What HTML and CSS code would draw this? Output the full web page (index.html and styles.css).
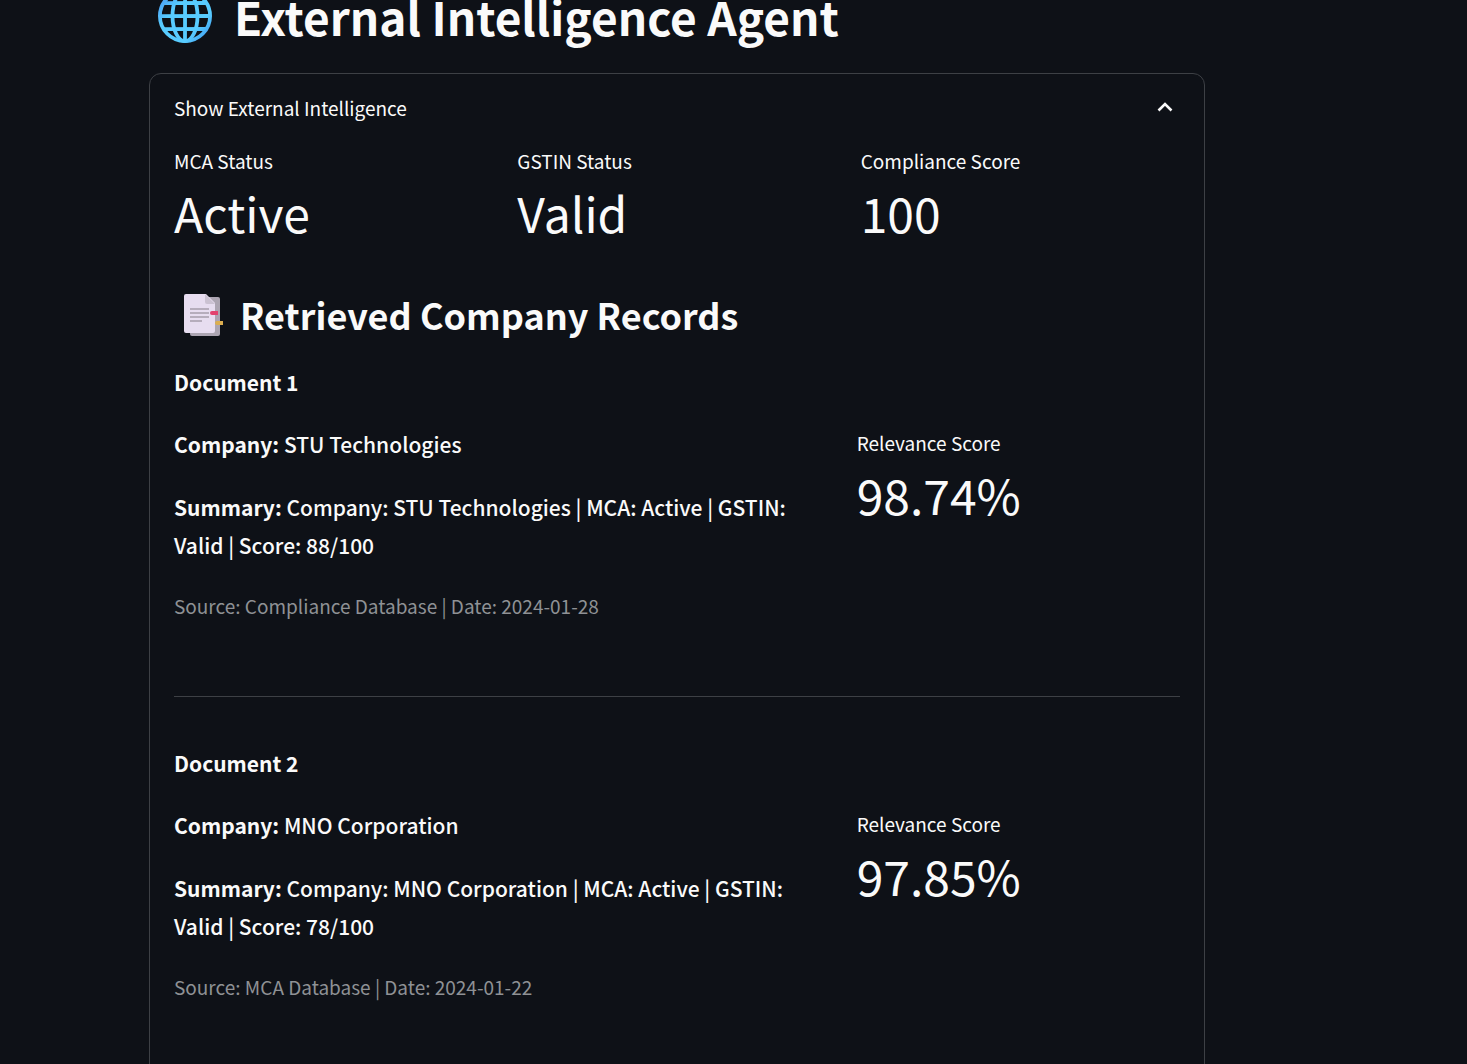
FILE: index.html
```html
<!DOCTYPE html>
<html lang="en">
<head>
<meta charset="utf-8">
<meta name="viewport" content="width=device-width, initial-scale=1">
<title>External Intelligence Agent</title>
<link rel="stylesheet" href="styles.css">
</head>
<body>
<main class="page">
  <h1 class="title">
    <svg class="title-icon" viewBox="0 0 56 56" aria-hidden="true">
      <defs>
        <linearGradient id="globe" gradientUnits="userSpaceOnUse" x1="4" y1="8" x2="52" y2="50">
          <stop offset="0" stop-color="#4a9cf5"/>
          <stop offset="0.3" stop-color="#58ccff"/>
          <stop offset="0.75" stop-color="#58ccff"/>
          <stop offset="1" stop-color="#3f9cf2"/>
        </linearGradient>
      </defs>
      <g fill="none" stroke="url(#globe)" stroke-width="3.800">
        <circle cx="28" cy="28" r="25.100"/>
        <ellipse cx="28" cy="28" rx="12.500" ry="25.100"/>
        <path d="M28.1 2.5 28 53.5M2.5 28.1 53.5 28M7 15.1 49 15M7 41.1 49 41"/>
      </g>
    </svg>
    External Intelligence Agent
  </h1>

  <details class="expander" open>
    <summary class="expander-header">
      Show External Intelligence
      <svg class="chevron" viewBox="0 0 24 24" aria-hidden="true">
        <path d="M5.500 14.500 12 8l6.500 6.500" fill="none" stroke="#fafafa" stroke-width="2.600"/>
      </svg>
    </summary>
    <div class="expander-body">
      <section class="metrics">
        <div class="metric"><div class="metric-label">MCA Status</div><div class="metric-value">Active</div></div>
        <div class="metric"><div class="metric-label">GSTIN Status</div><div class="metric-value">Valid</div></div>
        <div class="metric"><div class="metric-label">Compliance Score</div><div class="metric-value">100</div></div>
      </section>

      <h2 class="subtitle">
        <svg class="subtitle-icon" viewBox="-2 -3 56 56" aria-hidden="true">
          <path d="M16 8h26a2 2 0 0 1 2 2v35a2 2 0 0 1-2 2H16a2 2 0 0 1-2-2z" fill="#aca5b2"/>
          <path d="M10 5h20l9 9v28a2 2 0 0 1-2 2H10a2 2 0 0 1-2-2V7a2 2 0 0 1 2-2z" fill="#e7ddf0"/>
          <path d="M29 5v8a2 2 0 0 0 2 2h8z" fill="#cbc2d2"/>
          <path d="M14 20h19M14 24h19M14 28h19M14 32h12" stroke="#a69dab" stroke-width="1.500"/>
          <path d="M36 22h6v4h-6a2 2 0 0 1 0-4z" fill="#e2436f"/>
          <path d="M41 32h6v4h-6a2 2 0 0 1 0-4z" fill="#dcae50"/>
        </svg>
        Retrieved Company Records
      </h2>

      <article class="record">
        <h3 class="record-title">Document 1</h3>
        <div class="record-columns">
          <div class="record-details">
            <p><strong>Company:</strong> STU Technologies</p>
            <p><strong>Summary:</strong> Company: STU Technologies | MCA: Active | GSTIN: Valid | Score: 88/100</p>
            <p class="caption">Source: Compliance Database | Date: 2024-01-28</p>
          </div>
          <div class="record-score"><div class="metric-label">Relevance Score</div><div class="metric-value">98.74%</div></div>
        </div>
      </article>
      <hr class="divider">
      <article class="record">
        <h3 class="record-title">Document 2</h3>
        <div class="record-columns">
          <div class="record-details">
            <p><strong>Company:</strong> MNO Corporation</p>
            <p><strong>Summary:</strong> Company: MNO Corporation | MCA: Active | GSTIN: Valid | Score: 78/100</p>
            <p class="caption">Source: MCA Database | Date: 2024-01-22</p>
          </div>
          <div class="record-score"><div class="metric-label">Relevance Score</div><div class="metric-value">97.85%</div></div>
        </div>
      </article>
    </div>
  </details>
</main>
</body>
</html>
```
FILE: styles.css
```css
* {
  box-sizing: border-box;
}

body {
  margin: 0;
  background: #0e1117;
  color: #fafafa;
  font-family: "Source Sans Pro", "Noto Sans CJK SC", sans-serif;
  font-size: 21px;
  font-weight: 500;
  line-height: 38px;
}

h1, h2, h3, p {
  margin: 0;
}

.page {
  max-width: 1205px;
  height: 100vh;
  padding-left: 149px;
  overflow: hidden;
}

.title {
  display: flex;
  align-items: center;
  gap: 21px;
  margin-top: -14px;
  padding-left: 8px;
  font-size: 46px;
  font-weight: 600;
  line-height: 60px;
}

.title-icon {
  width: 56px;
  height: 56px;
}

.expander {
  margin-top: 27px;
  padding: 0 24px 80px;
  border: 1px solid #3d4045;
  border-radius: 12px;
}

.expander-header {
  display: flex;
  align-items: center;
  justify-content: space-between;
  padding: 17px 3px 18px 0;
  font-size: 19px;
  font-weight: 400;
  line-height: 34px;
  list-style: none;
  cursor: pointer;
}

.chevron {
  width: 24px;
  height: 24px;
}

.metrics {
  display: grid;
  grid-template-columns: repeat(3, 1fr);
  gap: 24px;
}

.metric-label {
  font-size: 19px;
  font-weight: 400;
  line-height: 36px;
}

.metric-value {
  font-size: 48px;
  font-weight: 400;
  line-height: 66px;
}

.subtitle {
  display: flex;
  align-items: center;
  gap: 10px;
  margin: 41px 0 21px;
  font-size: 36px;
  font-weight: 600;
  line-height: 50px;
}

.subtitle-icon {
  width: 56px;
  height: 56px;
}

.record-title {
  margin-bottom: 24px;
  font-size: 21px;
  font-weight: 600;
}

.record-columns {
  display: flex;
  gap: 24px;
}

.record-details {
  display: flex;
  flex: 1 1 calc(66.67% - 24px);
  flex-direction: column;
  gap: 25px;
}

.record-score {
  flex: 1 1 calc(33.33% - 24px);
}

.caption {
  color: #8f9195;
  font-size: 19px;
  font-weight: 400;
  line-height: 34px;
}

.divider {
  height: 1px;
  margin: 73px 0 47px;
  border: 0;
  background: #3d4045;
}
```
